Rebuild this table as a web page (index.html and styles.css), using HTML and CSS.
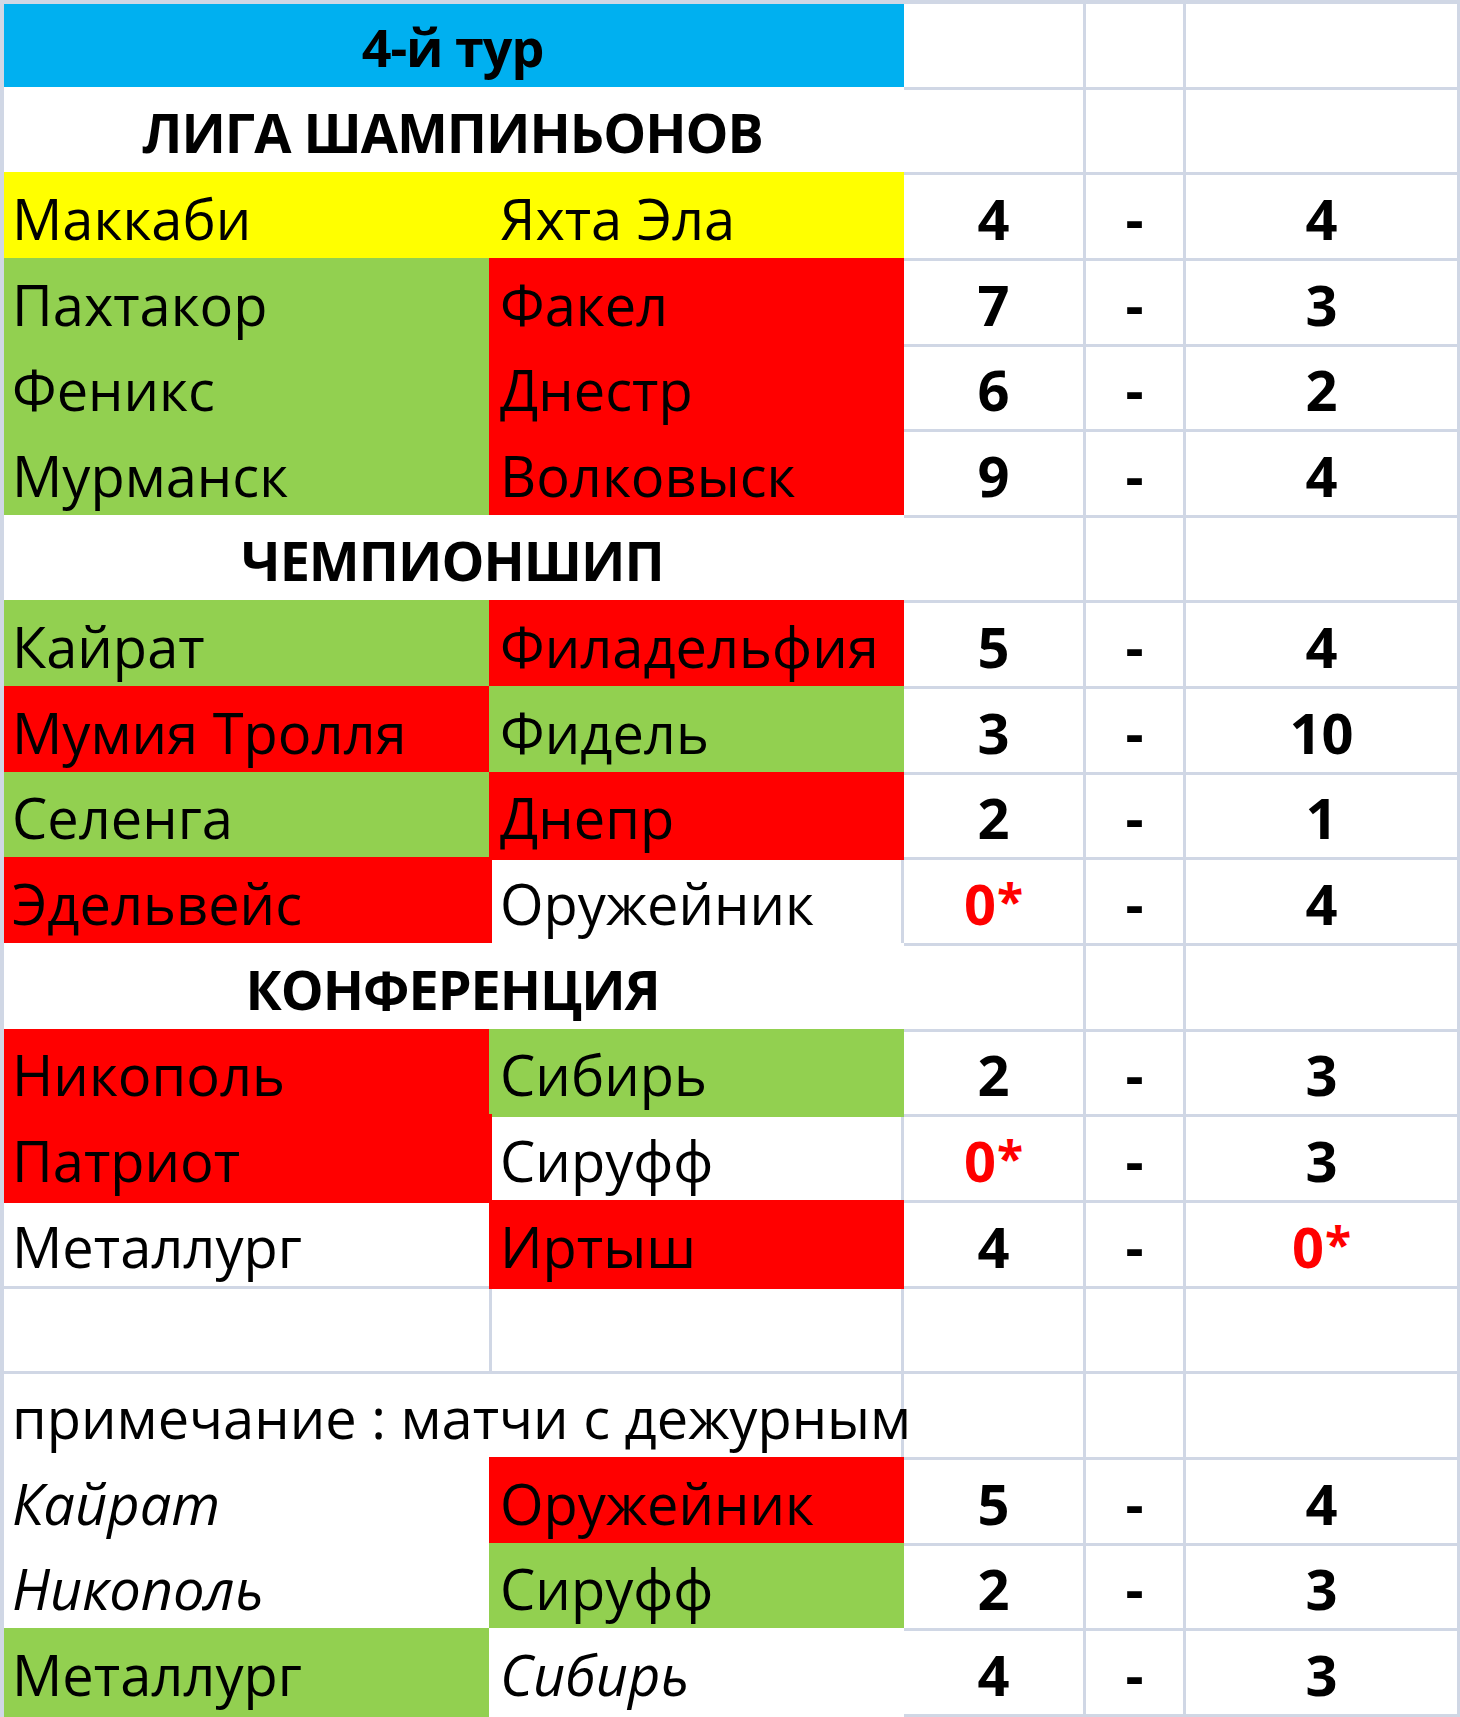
FILE: index.html
```html
<!DOCTYPE html>
<html lang="ru">
<head>
<meta charset="utf-8">
<title>4-й тур</title>
<link rel="stylesheet" href="styles.css">
</head>
<body>
<div class="sheet">
  <div class="c span2 blue title">4-й тур</div>
  <div class="c"></div><div class="c"></div><div class="c"></div>

  <div class="c span2 white head">ЛИГА ШАМПИНЬОНОВ</div>
  <div class="c"></div><div class="c"></div><div class="c"></div>

  <div class="c yellow team">Маккаби</div>
  <div class="c yellow team">Яхта Эла</div>
  <div class="c score">4</div><div class="c score">-</div><div class="c score">4</div>

  <div class="c green team">Пахтакор</div>
  <div class="c red team">Факел</div>
  <div class="c score">7</div><div class="c score">-</div><div class="c score">3</div>

  <div class="c green team">Феникс</div>
  <div class="c red team">Днестр</div>
  <div class="c score">6</div><div class="c score">-</div><div class="c score">2</div>

  <div class="c green team">Мурманск</div>
  <div class="c red team">Волковыск</div>
  <div class="c score">9</div><div class="c score">-</div><div class="c score">4</div>

  <div class="c span2 white head">ЧЕМПИОНШИП</div>
  <div class="c"></div><div class="c"></div><div class="c"></div>

  <div class="c green team">Кайрат</div>
  <div class="c red team">Филадельфия</div>
  <div class="c score">5</div><div class="c score">-</div><div class="c score">4</div>

  <div class="c red team">Мумия Тролля</div>
  <div class="c green team">Фидель</div>
  <div class="c score">3</div><div class="c score">-</div><div class="c score">10</div>

  <div class="c green team">Селенга</div>
  <div class="c red team">Днепр</div>
  <div class="c score">2</div><div class="c score">-</div><div class="c score">1</div>

  <div class="c red team">Эдельвейс</div>
  <div class="c team">Оружейник</div>
  <div class="c score forfeit"><span class="val">0<span class="star">*</span></span></div><div class="c score">-</div><div class="c score">4</div>

  <div class="c span2 white head">КОНФЕРЕНЦИЯ</div>
  <div class="c"></div><div class="c"></div><div class="c"></div>

  <div class="c red team">Никополь</div>
  <div class="c green team">Сибирь</div>
  <div class="c score">2</div><div class="c score">-</div><div class="c score">3</div>

  <div class="c red team">Патриот</div>
  <div class="c team">Сируфф</div>
  <div class="c score forfeit"><span class="val">0<span class="star">*</span></span></div><div class="c score">-</div><div class="c score">3</div>

  <div class="c team">Металлург</div>
  <div class="c red team">Иртыш</div>
  <div class="c score">4</div><div class="c score">-</div><div class="c score forfeit"><span class="val">0<span class="star">*</span></span></div>

  <div class="c"></div><div class="c"></div><div class="c"></div><div class="c"></div><div class="c"></div>

  <div class="c span2 team note">примечание : матчи с дежурным</div>
  <div class="c"></div><div class="c"></div><div class="c"></div>

  <div class="c white team duty">Кайрат</div>
  <div class="c red team">Оружейник</div>
  <div class="c score">5</div><div class="c score">-</div><div class="c score">4</div>

  <div class="c white team duty">Никополь</div>
  <div class="c green team">Сируфф</div>
  <div class="c score">2</div><div class="c score">-</div><div class="c score">3</div>

  <div class="c green team">Металлург</div>
  <div class="c white team duty">Сибирь</div>
  <div class="c score">4</div><div class="c score">-</div><div class="c score">3</div>
</div>
</body>
</html>
```
FILE: styles.css
```css
html, body {
  margin: 0;
  padding: 0;
  background: #ffffff;
}

body {
  width: 1460px;
  height: 1717px;
  overflow: hidden;
  font-family: "Open Sans", "Noto Sans", "DejaVu Sans", sans-serif;
  color: #000000;
}

.sheet {
  display: grid;
  grid-template-columns: 488px 412px 182px 100px 274px;
  grid-template-rows: repeat(20, 85.65px);
  border-top: 4px solid #d0d7e5;
  border-left: 4px solid #d0d7e5;
  overflow: hidden;
  background: #ffffff;
}

.c {
  box-sizing: border-box;
  border-right: 3px solid #d0d7e5;
  border-bottom: 3px solid #d0d7e5;
  display: flex;
  align-items: flex-end;
  padding: 0 0 12px 8px;
  font-size: 56px;
  line-height: 1;
  white-space: nowrap;
  min-width: 0;
}

.span2 {
  grid-column: span 2;
}

/* filled cells hide the gridlines around them */
.blue, .white, .yellow, .green, .red {
  z-index: 1;
}

.blue {
  background: #00b0f0;
  border-color: #00b0f0;
  box-shadow: -3px 0 0 #00b0f0, 0 -3px 0 #00b0f0, -3px -3px 0 #00b0f0;
}

.white {
  background: #ffffff;
  border-color: #ffffff;
  box-shadow: -3px 0 0 #ffffff, 0 -3px 0 #ffffff, -3px -3px 0 #ffffff;
}

.yellow {
  background: #ffff00;
  border-color: #ffff00;
  box-shadow: -3px 0 0 #ffff00, 0 -3px 0 #ffff00, -3px -3px 0 #ffff00;
}

.green {
  background: #92d050;
  border-color: #92d050;
  box-shadow: -3px 0 0 #92d050, 0 -3px 0 #92d050, -3px -3px 0 #92d050;
}

.red {
  background: #ff0000;
  border-color: #ff0000;
  box-shadow: -3px 0 0 #ff0000, 0 -3px 0 #ff0000, -3px -3px 0 #ff0000;
}

.title {
  justify-content: center;
  font-weight: 700;
  font-size: 52px;
  letter-spacing: -1px;
  padding: 0 0 14px 0;
}

.head {
  justify-content: center;
  font-weight: 700;
  font-size: 54px;
  letter-spacing: -1px;
  padding: 0 0 13px 0;
}

.team {
  justify-content: flex-start;
}

.duty {
  font-style: italic;
}

.score {
  justify-content: center;
  font-weight: 700;
  padding: 0 0 12px 0;
}

.forfeit {
  color: #ff0000;
}

.val {
  line-height: 1;
}

.star {
  font-size: 48px;
  line-height: 0;
  vertical-align: 6px;
  margin-left: 1px;
}
```
